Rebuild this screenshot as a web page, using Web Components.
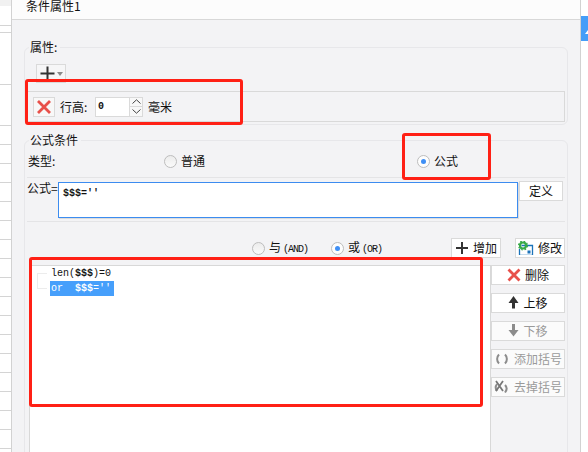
<!DOCTYPE html>
<html lang="zh">
<head>
<meta charset="utf-8">
<title>条件属性</title>
<style>
  html, body { margin: 0; height: 452px; overflow: hidden; background: #fff; }
  body { font: 12px "Noto Sans CJK SC", "Liberation Sans", sans-serif; color: #111; }
  .mono { font-family: "Liberation Mono", "Noto Sans CJK SC", monospace; }
  .tag { font-size: 10px; letter-spacing: -1px; margin-left: 2px; }
</style>
</head>
<body>
<template id="group-tpl">
  <style>
    :host { display: block; }
    fieldset { margin: 0; padding: 0 2px; height: 100%; box-sizing: border-box; border: 1px solid #e7e7ea; border-radius: 6px; min-width: 0; }
    legend { margin-left: 2px; padding: 0 3px 0 1px; line-height: 14px; height: 14px; }
  </style>
  <fieldset>
    <legend><slot name="legend"></slot></legend>
    <slot></slot>
  </fieldset>
</template>

<div style="display:flex;position:relative;width:588px;height:452px;overflow:hidden">
  <sheet-strip></sheet-strip>
  <cond-dialog>
    <span slot="title">条件属性1</span>

    <cond-group style="height:85px">
      <span slot="legend">属性:</span>
      <div style="padding-left:9px;height:29px;padding-top:10px;box-sizing:border-box">
        <div style="width:30px;height:19px;box-sizing:border-box;border:1px solid #dadada;display:flex;align-items:center;padding-left:3px;gap:2px;background:#f6f6f7">
          <svg width="15" height="15" viewBox="0 0 15 15"><path d="M.5 7.500h14M7.500 .5v14" stroke="#333" stroke-width="2" fill="none"/></svg>
          <svg width="6" height="4"><path d="M0 0H6L3 4z" fill="#8a8a8a"/></svg>
        </div>
      </div>
      <div style="margin:8px 0 0 0;height:31px;box-sizing:border-box;border:1px solid #d9d9d9;display:flex;align-items:center;padding-left:5px;line-height:14px">
        <div style="width:22px;height:20px;box-sizing:border-box;border:1px solid #dadada;background:#f8f8f8;display:flex;align-items:center;justify-content:center">
          <svg width="14" height="14" viewBox="0 0 14 14"><path d="M1 1l12 12M13 1L1 13" stroke="#e8504a" stroke-width="2.800" fill="none"/></svg>
        </div>
        <span style="margin-left:5px;width:35px;flex:none">行高:</span>
        <spin-input>0</spin-input>
        <span style="margin-left:5px">毫米</span>
      </div>
    </cond-group>

    <cond-group style="height:400px">
      <span slot="legend">公式条件</span>
      <div style="height:31px;box-sizing:border-box;border-bottom:1px solid #e4e4e6;display:grid;grid-template-columns:136px 253px 1fr;padding:7px 0 0 1px;align-items:start;line-height:14px">
        <span>类型:</span>
        <radio-item>普通</radio-item>
        <radio-item checked>公式</radio-item>
      </div>
      <div style="height:44px;box-sizing:border-box;border-bottom:1px solid #e4e4e6;display:flex;align-items:flex-start;padding-top:3px;line-height:14px">
        <span style="width:31px;flex:none;white-space:nowrap">公式=</span>
        <div class="mono" style="width:460px;height:36px;margin-top:1px;box-sizing:border-box;flex:none;background:#fff;border:1px solid #3c8cf0;box-shadow:1px 1px 0 #dcdcdc;padding:4px 0 0 4px;font-size:10px;font-weight:bold;line-height:14px">$$$=''</div>
        <tool-btn style="width:44px;margin-left:1px;flex:none">定义</tool-btn>
      </div>
      <div style="display:grid;grid-template-columns:79px 120px 64px 50px;padding:16px 0 0 225px;height:20px;align-items:center">
        <radio-item>与<span class="mono tag">(AND)</span></radio-item>
        <radio-item checked>或<span class="mono tag">(OR)</span></radio-item>
        <tool-btn icon="plus" style="width:50px">增加</tool-btn>
        <tool-btn icon="gear" iw="16" style="width:50px">修改</tool-btn>
      </div>
      <div style="display:flex;margin:7px 0 0 2px">
        <cond-list>
          <div>len(<b>$$$</b>)=0</div>
          <div class="on">or  <b>$$$</b>=''</div>
        </cond-list>
        <div style="width:74px;display:flex;flex-direction:column;gap:8px">
          <tool-btn icon="cross">删除</tool-btn>
          <tool-btn icon="up" iw="11">上移</tool-btn>
          <tool-btn icon="down" iw="11" disabled>下移</tool-btn>
          <tool-btn icon="parens" iw="16" disabled>添加括号</tool-btn>
          <tool-btn icon="unparens" iw="16" disabled>去掉括号</tool-btn>
        </div>
      </div>
    </cond-group>
  </cond-dialog>
  <side-strip></side-strip>

  <red-mark style="left:25px;top:79px;width:218px;height:46px"></red-mark>
  <red-mark style="left:402px;top:133px;width:89px;height:47px"></red-mark>
  <red-mark style="left:29px;top:257px;width:454px;height:150px"></red-mark>
</div>

<script>
const ICONS = {
  plus: '<path d="M1 7h12M7 1v12" stroke="#333" stroke-width="2" fill="none"/>',
  cross: '<path d="M1.500 1.500l11 11M12.500 1.500l-11 11" stroke="#e8504a" stroke-width="2.800" fill="none"/>',
  up: '<path d="M5.500 0L10.500 7H7V12.500H4V7H.5z" fill="#333"/>',
  down: '<path d="M4 0H7V6H10.500L5.500 12.500L.5 6H4z" fill="#8c8c8c"/>',
  parens: '<path d="M5 2.500C2.500 5 2.500 9 5 11.500M11 2.500C13.500 5 13.500 9 11 11.500" stroke="#8c8c8c" stroke-width="2" fill="none"/>',
  unparens: '<path d="M3 4C1.500 6 1.500 9 3 11M11 5C13 7 13 10 11 12.500" stroke="#8c8c8c" stroke-width="2" fill="none"/><path d="M2 1l7 10M9 1L2 11" stroke="#777" stroke-width="1.800" fill="none"/>',
  gear: '<path d="M3.500 4.500H14.500V14.500H1.500V8" stroke="#1b73ba" stroke-width="1.300" fill="none"/><rect x="9.500" y="9.500" width="3" height="3" fill="#1b73ba"/><circle cx="5" cy="4.500" r="3" fill="none" stroke="#37a947" stroke-width="2.200"/><circle cx="5" cy="4.500" r="4.400" fill="none" stroke="#37a947" stroke-width="1.300" stroke-dasharray="1.700 1.760"/>'
};

// left edge of the sheet behind the dialog
class SheetStrip extends HTMLElement {
  constructor() {
    super();
    this.attachShadow({ mode: 'open' });
    const stops = [25, 32, 84, 125];
    for (let y = 144; y < 452; y += 19) stops.push(y);
    let prev = 6;
    let rows = '';
    stops.forEach(y => {
      rows += `<div style="height:${y - prev}px"></div>`;
      prev = y + 1;
    });
    this.shadowRoot.innerHTML = `
      <style>
        :host { display: block; width: 11px; flex: none; border-right: 1px solid #d2d2d2; }
        header { height: 6px; background: #f1f1f1; }
        div { border-bottom: 1px solid #d4d4d4; }
      </style>
      <header></header>${rows}`;
  }
}

class SideStrip extends HTMLElement {
  constructor() {
    super();
    this.attachShadow({ mode: 'open' });
    this.shadowRoot.innerHTML = `
      <style>
        :host { display: block; flex: 1; border-left: 1px solid #d2d2d2; padding-top: 16px; }
        div { height: 25px; background: #459df8; display: flex; align-items: flex-end; justify-content: flex-end; padding-bottom: 7px; box-sizing: border-box; }
        svg { display: block; }
      </style>
      <div><svg width="3" height="4"><path d="M3 0V4H0z" fill="#fff"/></svg></div>`;
  }
}

class CondDialog extends HTMLElement {
  constructor() {
    super();
    this.attachShadow({ mode: 'open' });
    this.shadowRoot.innerHTML = `
      <style>
        :host { display: flex; flex-direction: column; width: 568px; flex: none; height: 452px; background: #f3f3f5; overflow: hidden; }
        header { height: 19px; flex: none; background: #fcfcfc; border-bottom: 1px solid #d8d8d8; padding-left: 14px; line-height: 12px; white-space: nowrap; }
        main { padding: 20px 12px 0 12px; display: flex; flex-direction: column; gap: 8px; }
      </style>
      <header><slot name="title"></slot></header>
      <main><slot></slot></main>`;
  }
}

class CondGroup extends HTMLElement {
  constructor() {
    super();
    this.attachShadow({ mode: 'open' });
    this.shadowRoot.appendChild(document.getElementById('group-tpl').content.cloneNode(true));
  }
}

class ToolBtn extends HTMLElement {
  constructor() {
    super();
    this.attachShadow({ mode: 'open' });
    const icon = this.getAttribute('icon');
    const w = this.getAttribute('iw') || 14;
    const svg = icon ? `<svg width="${w}" height="14" viewBox="0 0 ${w} 14">${ICONS[icon]}</svg>` : '';
    this.shadowRoot.innerHTML = `
      <style>
        :host { display: flex; align-items: center; justify-content: center; gap: 4px; box-sizing: border-box; height: 20px; background: #fff; border: 1px solid #dadada; white-space: nowrap; line-height: 14px; }
        :host([disabled]) { color: #9a9a9a; background: #fbfbfb; }
        svg { display: block; flex: none; }
      </style>
      ${svg}<slot></slot>`;
  }
}

class RadioItem extends HTMLElement {
  constructor() {
    super();
    this.attachShadow({ mode: 'open' });
    this.shadowRoot.innerHTML = `
      <style>
        :host { display: inline-flex; align-items: center; gap: 4px; white-space: nowrap; line-height: 14px; }
        i { width: 13px; height: 13px; flex: none; box-sizing: border-box; border-radius: 50%; border: 1px solid #bdbdbd; background: linear-gradient(#ececec, #fafafa); display: flex; align-items: center; justify-content: center; }
        :host([checked]) i { background: #fdfdfd; }
        :host([checked]) i::after { content: ""; width: 5px; height: 5px; border-radius: 50%; background: #3f8ff5; }
      </style>
      <i></i><span><slot></slot></span>`;
  }
}

class SpinInput extends HTMLElement {
  constructor() {
    super();
    this.attachShadow({ mode: 'open' });
    this.shadowRoot.innerHTML = `
      <style>
        :host { display: flex; width: 48px; height: 20px; flex: none; }
        .val { width: 35px; box-sizing: border-box; background: #fff; border: 1px solid #dadada; padding-left: 2px; font: bold 10px/18px "Liberation Mono", monospace; }
        .spin { width: 13px; display: flex; flex-direction: column; }
        .spin b { flex: 1; border: 1px solid #dadada; border-left: 0; background: #f8f8f8; display: flex; align-items: center; justify-content: center; }
        .spin b + b { border-top: 0; }
        svg { display: block; }
      </style>
      <div class="val"><slot></slot></div>
      <div class="spin">
        <b><svg width="9" height="5"><path d="M.5 4.500L4.500 .8L8.500 4.500" fill="none" stroke="#444"/></svg></b>
        <b><svg width="9" height="5"><path d="M.5 .5L4.500 4.200L8.500 .5" fill="none" stroke="#444"/></svg></b>
      </div>`;
  }
}

class CondList extends HTMLElement {
  constructor() {
    super();
    this.attachShadow({ mode: 'open' });
    this.shadowRoot.innerHTML = `
      <style>
        :host { display: flex; box-sizing: border-box; width: 462px; height: 200px; flex: none; background: #fff; border: 1px solid #d8d8d8; padding: 0 0 0 7px; }
        .bracket { width: 10px; height: 16px; margin-top: 7px; box-sizing: border-box; border: 1px solid #ececec; border-right: 0; flex: none; }
        .rows { margin-left: 3px; font: 10px/15px "Liberation Mono", monospace; color: #111; }
        ::slotted(div) { height: 15px; padding: 0 3px 0 1px; white-space: pre; }
        ::slotted(.on) { background: #469ffb; color: #fff; }
      </style>
      <div class="bracket"></div>
      <div class="rows"><slot></slot></div>`;
  }
}

// red annotation frames drawn over the screenshot
class RedMark extends HTMLElement {
  constructor() {
    super();
    this.attachShadow({ mode: 'open' });
    this.shadowRoot.innerHTML = `
      <style>
        :host { position: absolute; box-sizing: border-box; border: 3px solid #ff2015; border-radius: 3px; pointer-events: none; }
      </style>`;
  }
}

customElements.define('sheet-strip', SheetStrip);
customElements.define('side-strip', SideStrip);
customElements.define('cond-dialog', CondDialog);
customElements.define('cond-group', CondGroup);
customElements.define('tool-btn', ToolBtn);
customElements.define('radio-item', RadioItem);
customElements.define('spin-input', SpinInput);
customElements.define('cond-list', CondList);
customElements.define('red-mark', RedMark);
</script>
</body>
</html>
